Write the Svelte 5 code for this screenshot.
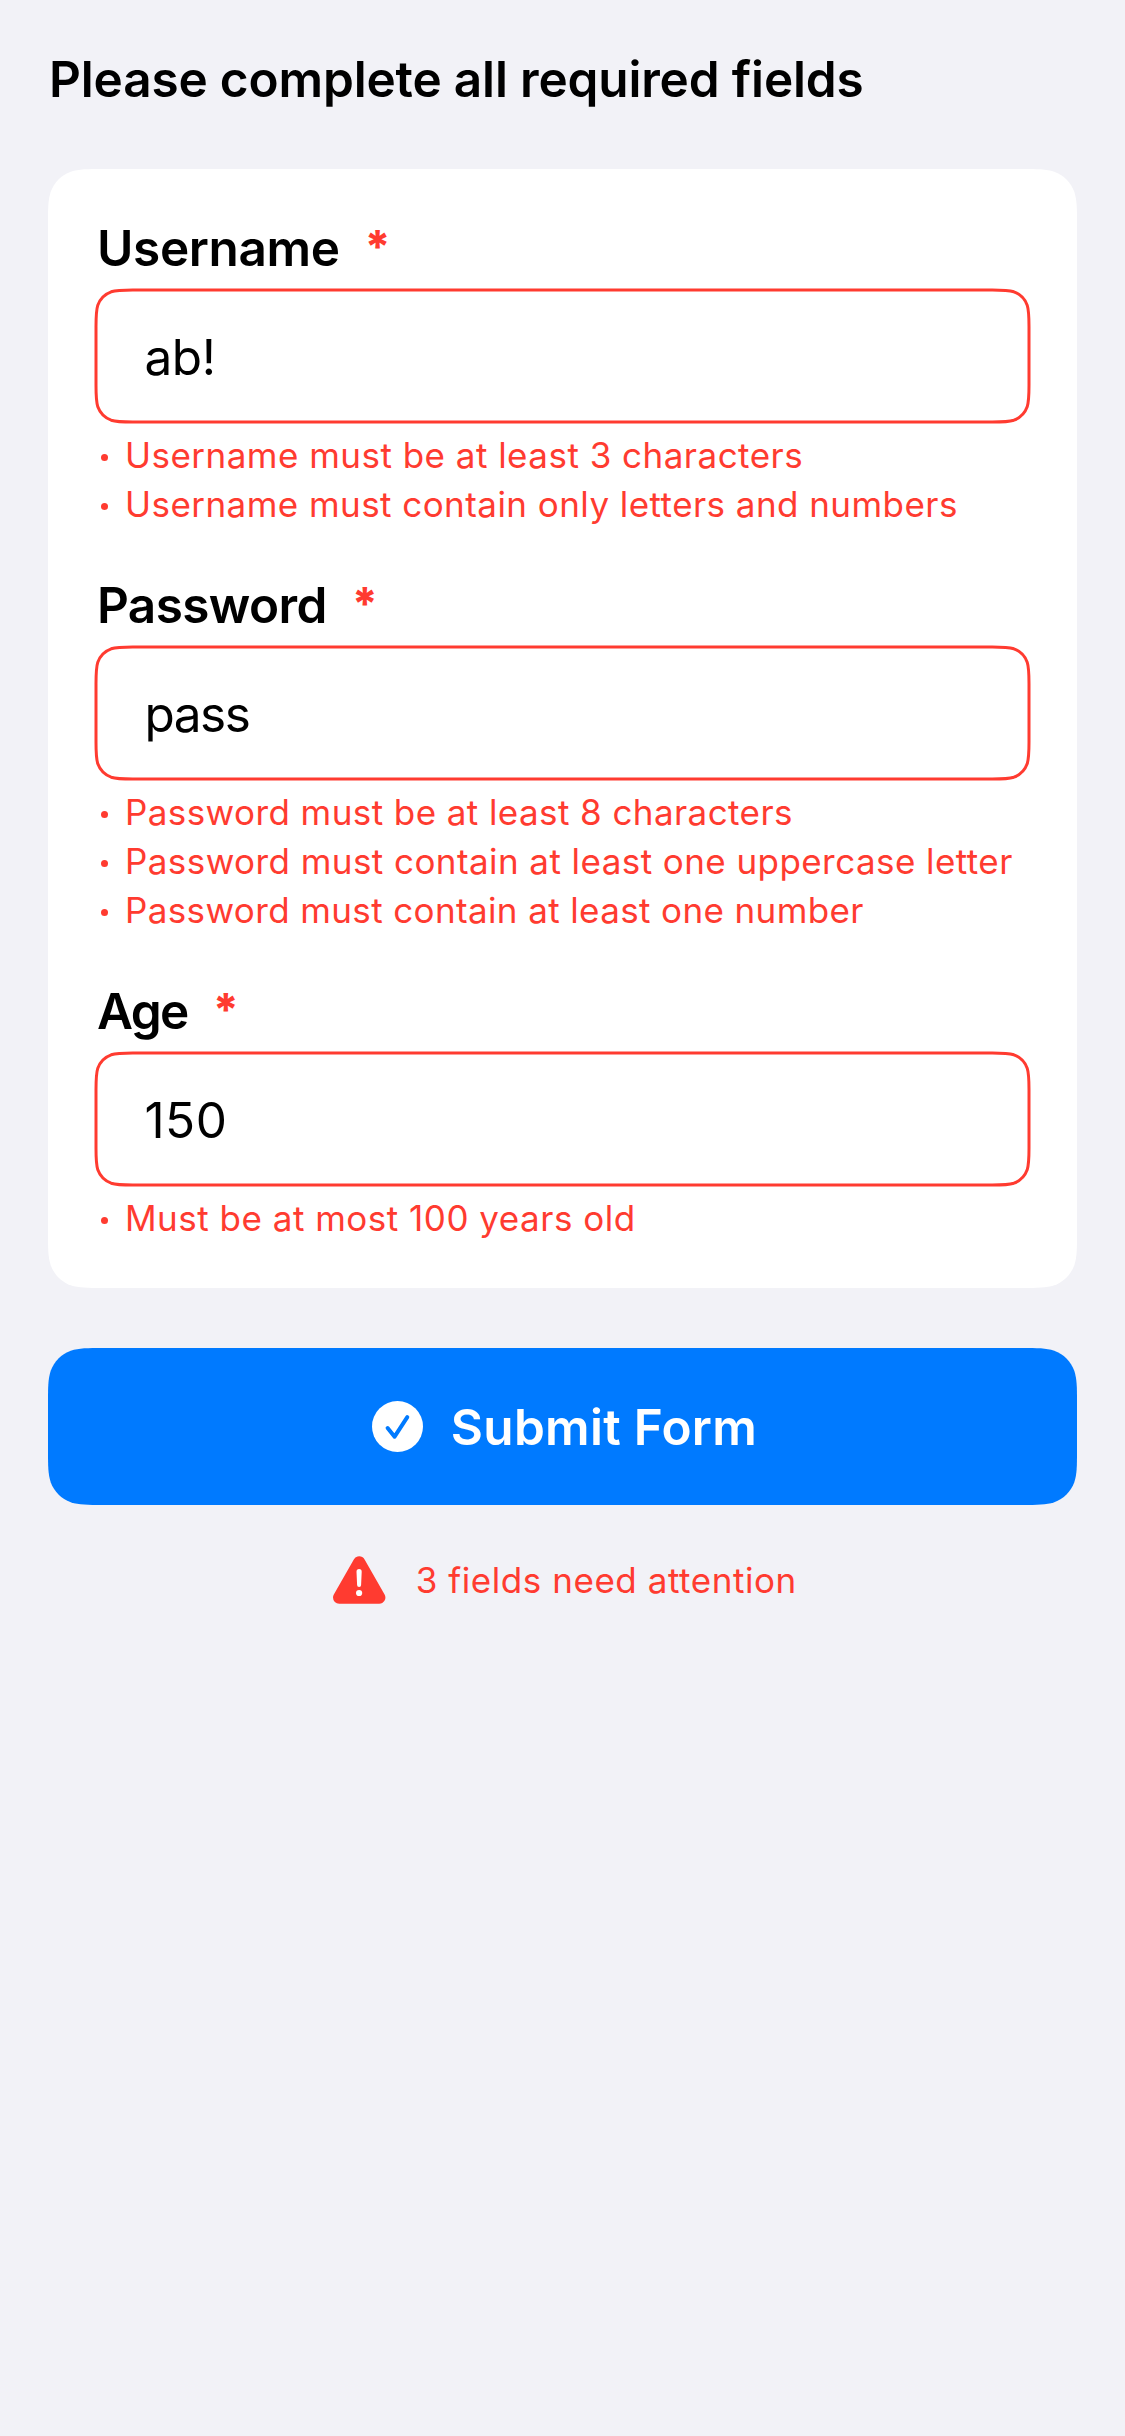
<script>
  const fields = [
    {
      label: 'Username', labelTracking: -0.37, value: 'ab!', valueTracking: -0.45,
      errors: [
        { text: 'Username must be at least 3 characters', tracking: 0.476 },
        { text: 'Username must contain only letters and numbers', tracking: 0.445 }
      ]
    },
    {
      label: 'Password', labelTracking: -0.62, value: 'pass', valueTracking: -1.5,
      errors: [
        { text: 'Password must be at least 8 characters', tracking: 0.417 },
        { text: 'Password must contain at least one uppercase letter', tracking: 0.43 },
        { text: 'Password must contain at least one number', tracking: 0.375 }
      ]
    },
    {
      label: 'Age', labelTracking: -1.6, value: '150', valueTracking: 0.45,
      errors: [{ text: 'Must be at most 100 years old', tracking: 0.5 }]
    }
  ];

  // Rounded rectangle with continuous-curvature corners.
  function squircle(x, y, w, h, r) {
    const a = 1.52866 * r, b = 1.08849 * r, c = 0.86841 * r;
    const d = 0.63149 * r, e = 0.07491 * r, f = 0.37282 * r, g = 0.16906 * r;
    const p = (px, py) => `${(x + px).toFixed(2)} ${(y + py).toFixed(2)}`;
    return [
      `M${p(a, 0)} L${p(w - a, 0)}`,
      `C${p(w - b, 0)} ${p(w - c, 0)} ${p(w - d, e)}`,
      `C${p(w - f, g)} ${p(w - g, f)} ${p(w - e, d)}`,
      `C${p(w, c)} ${p(w, b)} ${p(w, a)} L${p(w, h - a)}`,
      `C${p(w, h - b)} ${p(w, h - c)} ${p(w - e, h - d)}`,
      `C${p(w - g, h - f)} ${p(w - f, h - g)} ${p(w - d, h - e)}`,
      `C${p(w - c, h)} ${p(w - b, h)} ${p(w - a, h)} L${p(a, h)}`,
      `C${p(b, h)} ${p(c, h)} ${p(d, h - e)}`,
      `C${p(f, h - g)} ${p(g, h - f)} ${p(e, h - d)}`,
      `C${p(0, h - c)} ${p(0, h - b)} ${p(0, h - a)} L${p(0, a)}`,
      `C${p(0, b)} ${p(0, c)} ${p(e, d)}`,
      `C${p(g, f)} ${p(f, g)} ${p(d, e)}`,
      `C${p(c, 0)} ${p(b, 0)} ${p(a, 0)}Z`
    ].join(' ');
  }

  const cardClip = `path("${squircle(0, 0, 1029, 1119, 36)}")`;
  const buttonClip = `path("${squircle(0, 0, 1029, 157, 36)}")`;
  const inputOutline = squircle(2, 2, 933, 132, 24);
</script>

<main>
  <h1>Please complete all required fields</h1>

  <section class="card" style:clip-path={cardClip}>
    {#each fields as field}
      <div class="field">
        <div class="label">
          <span style:letter-spacing="{field.labelTracking}px">{field.label}</span>
          <span class="star">*</span>
        </div>
        <div class="input">
          <svg class="outline" width="937" height="136" viewBox="0 0 937 136">
            <path d={inputOutline} />
          </svg>
          <span style:letter-spacing="{field.valueTracking}px">{field.value}</span>
        </div>
        <ul>
          {#each field.errors as error}
            <li><i></i><span style:letter-spacing="{error.tracking}px">{error.text}</span></li>
          {/each}
        </ul>
      </div>
    {/each}
  </section>

  <button style:clip-path={buttonClip}>
    <svg width="51" height="51" viewBox="0 0 51 51">
      <circle cx="25.5" cy="25.5" r="25.5" fill="#fff" />
      <path d="M15.6 27l7 8.700L35.300 16.200" fill="none" stroke="#007aff" stroke-width="4" stroke-linecap="round" stroke-linejoin="round" />
    </svg>
    <span>Submit Form</span>
  </button>

  <p class="notice">
    <svg width="53" height="48" viewBox="0 0 53 48">
      <path d="M26.200 6.500L46.200 41.500H6.200z" fill="#ff3b30" stroke="#ff3b30" stroke-width="12.400" stroke-linejoin="round" />
      <path d="M23.500 15.700a2.600 2.600 0 0 1 5.200 0l-.6 13.400a2 2 0 0 1-4 0z" fill="#fff" />
      <circle cx="26.100" cy="37" r="3.100" fill="#fff" />
    </svg>
    <span>3 fields need attention</span>
  </p>
</main>

<style>
  :global(body) { background: #f2f2f7; }
  main {
    box-sizing: border-box;
    width: 1125px;
    min-height: 2436px;
    padding: 48px;
    color: #000;
    font-family: Inter, sans-serif;
    white-space: nowrap;
  }
  h1 {
    margin: 0;
    padding-left: 1px;
    font-size: 49.5px;
    line-height: 62px;
    font-weight: 600;
    letter-spacing: -0.16px;
  }
  .card {
    display: flex;
    flex-direction: column;
    gap: 46px;
    box-sizing: border-box;
    height: 1119px;
    margin-top: 59px;
    padding: 49px 46px 45px;
    background: #fff;
  }
  .label {
    display: flex;
    gap: 25px;
    height: 70px;
    padding-left: 3px;
    font-size: 49.5px;
    line-height: 60px;
    font-weight: 600;
  }
  .star {
    color: #ff3b30;
    font-size: 45px;
    font-weight: 800;
    line-height: 57px;
  }
  .input {
    position: relative;
    display: flex;
    align-items: center;
    box-sizing: border-box;
    height: 136px;
    padding: 2px 50px 0 50.5px;
    font-size: 49.5px;
    line-height: 60px;
  }
  .outline { position: absolute; inset: 0; }
  .outline path { fill: none; stroke: #ff3b30; stroke-width: 3px; }
  ul { list-style: none; margin: 7px 0 0; padding: 0; }
  li {
    display: flex;
    align-items: center;
    height: 49px;
    color: #ff3b30;
    font-size: 35px;
    line-height: 49px;
  }
  li i {
    width: 7px;
    height: 7px;
    margin: 4px 17px 0 7px;
    border-radius: 50%;
    background: #ff3b30;
  }
  button {
    display: flex;
    align-items: center;
    justify-content: center;
    gap: 28px;
    width: 100%;
    height: 157px;
    margin-top: 60px;
    padding: 0 0 0 4px;
    border: 0;
    background: #007aff;
    color: #fff;
    font: 600 49.5px/60px Inter, sans-serif;
    letter-spacing: 0.28px;
  }
  .notice {
    display: flex;
    align-items: center;
    justify-content: center;
    gap: 29.5px;
    margin: 51px 0 0;
    padding-left: 5px;
    color: #ff3b30;
    font-size: 35px;
    line-height: 48px;
    letter-spacing: 0.55px;
  }
</style>
